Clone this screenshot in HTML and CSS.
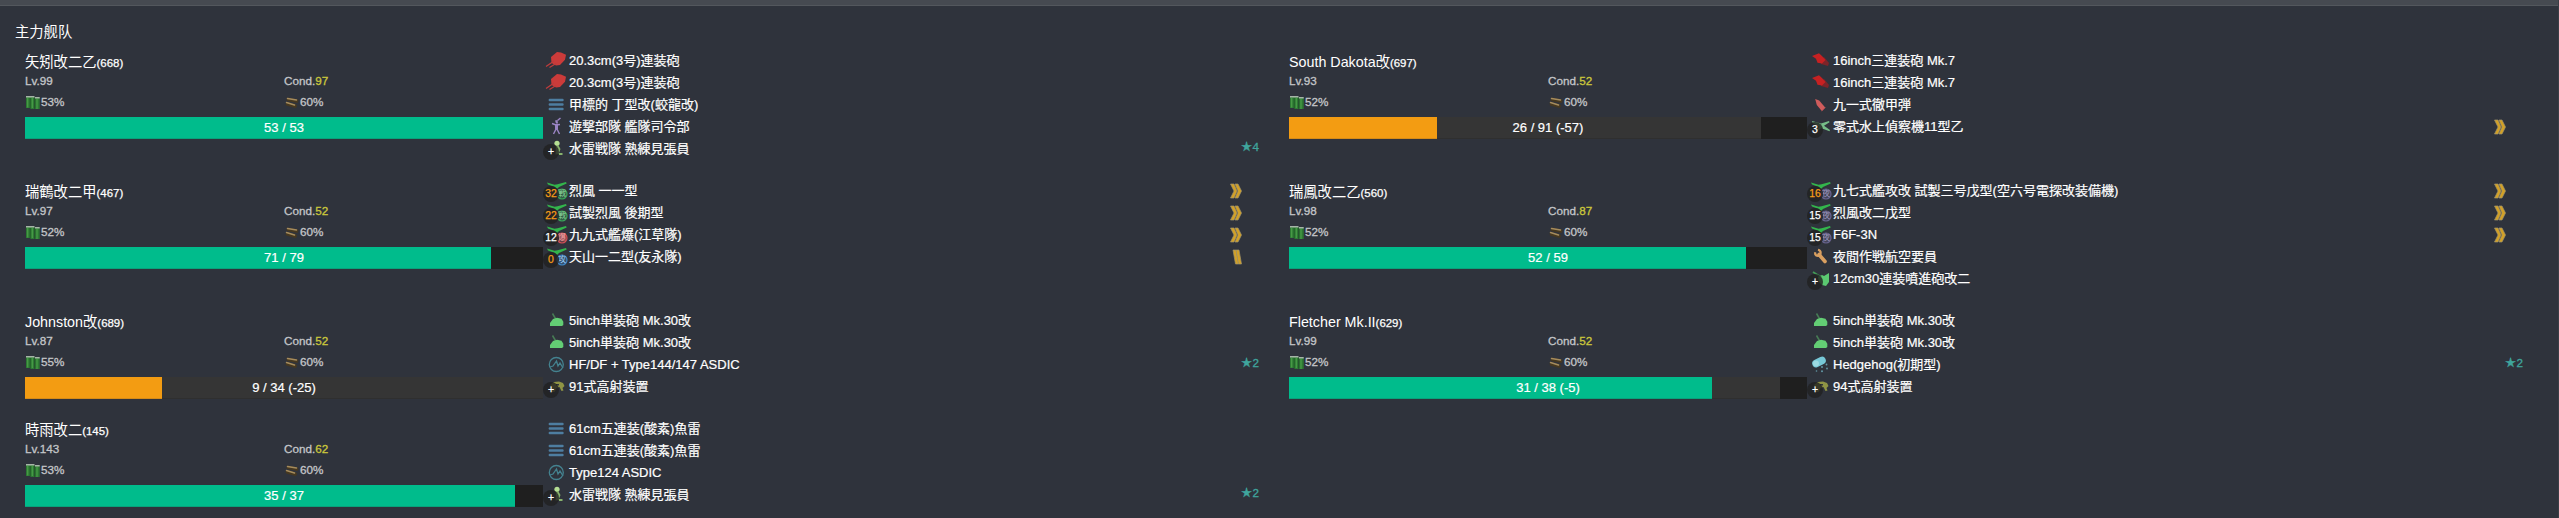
FILE: index.html
```html
<!DOCTYPE html>
<html lang="ja">
<head>
<meta charset="utf-8">
<title>主力舰队</title>
<link rel="stylesheet" href="styles.css">
</head>
<body>
<svg class="sprite" aria-hidden="true">
  <symbol id="gun-mid" viewBox="0 0 22 22"><path fill="#cb3b3a" d="M6 7l6-5 4 .5 5 2.200-1 5-5 5.300-4 .6-4.500-2.600z"/><path stroke="#c03c3c" stroke-width="1.300" fill="none" d="M9 11l-8 5.500M11 13.500l-6.500 4"/></symbol>
  <symbol id="gun-large" viewBox="0 0 22 22"><path fill="#7d2429" d="M12 9l3-2 5 6-1 3-7-2z"/><path fill="#c62122" d="M3 6l7-2.700 3 2.700 3.500 4-3.500 3.500-4.500-.7-1.500-4z"/></symbol>
  <symbol id="gun-small" viewBox="0 0 22 22"><path stroke="#477d55" stroke-width="1.500" d="M7.500 3.500l3.500 6"/><path fill="#63cd74" d="M5 16v-3l3-4 4-1.300 4.500 1 1.800 3V15l-1.300 1z"/></symbol>
  <symbol id="torpedo" viewBox="0 0 22 22"><path stroke="#4e7ea1" stroke-width="2.400" stroke-linecap="round" d="M4.800 6h12.700M4.800 10.500h12.700M4.800 15h12.700"/></symbol>
  <symbol id="command" viewBox="0 0 22 22"><g stroke="#9a84c4" fill="none" stroke-width="1.400"><path d="M7 7.500l4 1.500 4-.5M11 9v4l-2.500 5M12 9v4l2.500 5M12.500 4.500L15.500 2"/></g><path fill="#9a84c4" d="M10 4.500l2.500-.5.5 3.500h-2zM10 8h3v5.500h-3z"/></symbol>
  <symbol id="lookout" viewBox="0 0 22 22"><circle cx="12" cy="5.300" r="2.600" fill="#b5df93"/><path fill="#88b36d" d="M11 7.500h2.500l2 3.500-2 5-3 .5zM14 15h3.500v2h-3.500z"/></symbol>
  <symbol id="shell" viewBox="0 0 22 22"><path fill="#cf5c5c" d="M6.200 5l4 1.600 6 7-3.400 3.500-5-6z"/><path stroke="#9c4a50" d="M16.500 13.500l-3.700 3.700"/></symbol>
  <symbol id="seaplane" viewBox="0 0 22 22"><path fill="#76bd88" d="M3 5l9 2.500 8-2.500.5 1.200-5.500 3.500 6 4.300-.5 1.200-8-3-5 3-1-1.300 4-3.200-7-3.700z"/></symbol>
  <symbol id="plane" viewBox="0 0 22 22"><path fill="#33b54c" d="M2 2.500l7.500 2.200 3-.5 8.500-2.200.7 1.500L14 7l-2 2-2-2-7-2.500z"/></symbol>
  <symbol id="tag" viewBox="0 0 12 12"><circle cx="6" cy="6" r="5" fill="currentColor" fill-opacity=".35" stroke="currentColor" stroke-width="1.200"/></symbol>
  <symbol id="sonar" viewBox="0 0 22 22"><g stroke="#44828f" fill="none" stroke-width="1.300"><circle cx="11.300" cy="10.500" r="7"/><path d="M5 13l3-1 3.500-5 1.500 5 2-3 3 5"/></g></symbol>
  <symbol id="director" viewBox="0 0 22 22"><path fill="#8f9444" d="M5 9l4-3 5-.5 4 1.500 1.500 3-2 2 1 2.500-2 .5-2-4-3 1-2 4H7z"/><path fill="#30343d" d="M11 8h3v1.500h-3z"/></symbol>
  <symbol id="wrench" viewBox="0 0 22 22"><path fill="none" stroke="#d99f60" stroke-width="3.600" stroke-linecap="round" d="M10 8.500l6 7"/><path fill="none" stroke="#d99f60" stroke-width="2.200" d="M9 3.800c4 1 3 6 0 6-2 0-3-1.500-3-3.600"/></symbol>
  <symbol id="rocket" viewBox="0 0 22 22"><path stroke="#439857" stroke-width="1.800" d="M4 4l8 5"/><path fill="#5bc971" d="M9 9l4-2 2 1 5-3v9l-3 4-4-1-3-3z"/></symbol>
  <symbol id="hedgehog" viewBox="0 0 22 22"><path stroke="#77c8d7" stroke-width="7.600" stroke-linecap="round" d="M7 9.500l6-3"/><circle cx="7" cy="9.500" r="3" fill="#9cdae2"/><g fill="#6297a5"><circle cx="17.500" cy="10.500" r=".9"/><circle cx="13" cy="13" r="1"/><circle cx="18" cy="14.500" r=".9"/><circle cx="7.500" cy="17" r=".8"/><circle cx="13" cy="17.200" r="1"/></g></symbol>
  <symbol id="fuel" viewBox="0 0 16 16"><path fill="#2d7a33" d="M1 3h4.500v11H1zM5.500 3h4v12h-4zM10 3.500h4.700V15H10z"/><path stroke="#4a9d49" stroke-width="1.200" d="M2.700 4v9.500M7.300 4v10M12 5v10"/><path stroke="#1f5527" stroke-width=".8" d="M5.200 4v10M9.800 4v10.500"/><path fill="#a7b5a8" d="M1 2h4.500v1.500H1zM5.500 2h4v1.500h-4zM10 3h4.700v1.500H10z"/></symbol>
  <symbol id="ammo" viewBox="0 0 16 16"><g stroke-linecap="round"><path stroke="#463820" stroke-width="3.800" d="M4.500 5.500l8 1.500M3.500 10l7.500 2"/><path stroke="#a58b5d" stroke-width="1.500" d="M3.500 4.500l9 1.500M2.500 8.500l8 2.500"/></g></symbol>
  <symbol id="double-chevron" viewBox="0 0 12 16"><g fill="#d3a126" stroke="#a1946c" stroke-width=".7"><path d="M.5 1H4l3 7-3 7H.5l3.500-7z"/><path d="M5 1h3l3.500 7L8 15H5l3-7z"/></g></symbol>
  <symbol id="double-bar" viewBox="0 0 12 16"><g fill="#d3a126" stroke="#a1946c" stroke-width=".7"><path d="M3 1h3l2.500 14h-3z"/><path d="M6 1h3l2.500 14h-3z"/></g></symbol>
</svg>
<div class="topbar"></div>
<main class="fleet">
  <h1 class="fleet-title" lang="zh-CN">主力舰队</h1>
  <div class="ships" id="ships"></div>
</main>
<script src="fleet.js"></script>
</body>
</html>
```
FILE: styles.css
```css
* { box-sizing: border-box; }
body {
  margin: 0;
  height: 518px;
  background: #2f333c;
  color: #fff;
  font: 13px/22px "Liberation Sans", "Noto Sans CJK JP", sans-serif;
  border-right: 1px solid #3a3e46;
  overflow: hidden;
}
.sprite { position: absolute; width: 0; height: 0; }
.topbar { height: 6px; background: #464a51; border-bottom: 1px solid #53575d; }
.fleet { padding: 15px 0 0 15px; }
.fleet-title {
  margin: 0;
  height: 29px;
  font: 14.300px/22px "Liberation Sans", "Noto Sans CJK SC", sans-serif;
}
.ships {
  display: grid;
  grid-template-columns: 1264px 1264px;
  padding-left: 10px;
}
.ship { display: flex; gap: 2px; padding-bottom: 20px; }
.ship:last-child { padding-bottom: 0; }
.info { width: 518px; height: 88px; flex: none; white-space: nowrap; }
.name { height: 22px; font-size: 14.300px; line-height: 24px; }
.name small { font-size: 11.440px; -webkit-text-stroke: .25px; }
.stats {
  display: grid;
  grid-template-columns: 1fr 1fr;
  grid-template-rows: 17px 28px;
  align-items: center;
  color: #c4c6c9;
  font-size: 11.700px;
  line-height: 17px;
  -webkit-text-stroke: .3px;
}
.cond { color: #cbc83b; }
.supply { display: flex; align-items: center; padding-bottom: 3px; }
.supply svg { width: 16px; height: 16px; }
.hp {
  display: grid;
  height: 22px;
  background: #1f1f1f;
}
.hp > * { grid-area: 1 / 1; }
.lost { background: #353535; box-shadow: inset 0 -1px #2f2f2f; }
.now { background: #00bc8c; box-shadow: inset 0 -1px #08a27b; }
.now.warn { background: #f39c12; box-shadow: inset 0 -1px #d58b18; }
.hp-text { text-align: center; line-height: 21px; -webkit-text-stroke: .2px; }
.equips { width: 714px; }
.equip { display: flex; height: 22px; align-items: center; }
.icon { position: relative; width: 22px; height: 22px; margin-right: 2px; flex: none; }
.icon svg { display: block; width: 22px; height: 22px; }
.count {
  position: absolute;
  left: -2px;
  top: 6px;
  width: 16px;
  height: 16px;
  border-radius: 50%;
  background: rgba(32, 32, 32, .8);
  font-size: 10.400px;
  line-height: 16px;
  text-align: center;
  -webkit-text-stroke: .25px;
}
.count.full { color: #f59c18; }
.icon .type { position: absolute; left: 11px; top: 8px; width: 12px; height: 12px; }
.type-text { position: absolute; left: 13px; top: 10px; width: 8px; font-size: 8px; line-height: 8px; }
.fighter { color: #39a85a; }
.bomber { color: #d34e57; }
.attacker { color: #3f87c9; }
.night { color: #68638f; }
.equip-name { flex: 1; white-space: nowrap; line-height: 22px; -webkit-text-stroke: .2px; }
.alv { width: 12px; height: 16px; margin-right: 17px; }
.star { color: #3fa59d; font-size: 11.700px; line-height: 18px; height: 22px; -webkit-text-stroke: .3px; }
.star span { font-family: "DejaVu Sans", sans-serif; font-size: 13px; }
```
FILE: fleet.js
```js
// equipment: [icon, name, { n: slot count, full: orange count, type, alv, star }]
const ships = [
  { name: '矢矧改二乙', id: 668, lv: 99, cond: 97, fuel: 53, hp: 53, max: 53, eq: [
    ['gun-mid', '20.3cm(3号)連装砲'], ['gun-mid', '20.3cm(3号)連装砲'],
    ['torpedo', '甲標的 丁型改(蛟龍改)'], ['command', '遊撃部隊 艦隊司令部'],
    ['lookout', '水雷戦隊 熟練見張員', { n: '+', star: 4 }]] },
  { name: 'South Dakota改', id: 697, lv: 93, cond: 52, fuel: 52, hp: 26, max: 91, lost: 57, eq: [
    ['gun-large', '16inch三連装砲 Mk.7'], ['gun-large', '16inch三連装砲 Mk.7'],
    ['shell', '九一式徹甲弾'], ['seaplane', '零式水上偵察機11型乙', { n: 3, alv: 'double-chevron' }]] },
  { name: '瑞鶴改二甲', id: 467, lv: 97, cond: 52, fuel: 52, hp: 71, max: 79, eq: [
    ['plane', '烈風 一一型', { n: 32, full: 1, type: 'fighter', alv: 'double-chevron' }],
    ['plane', '試製烈風 後期型', { n: 22, full: 1, type: 'fighter', alv: 'double-chevron' }],
    ['plane', '九九式艦爆(江草隊)', { n: 12, type: 'bomber', alv: 'double-chevron' }],
    ['plane', '天山一二型(友永隊)', { n: 0, full: 1, type: 'attacker', alv: 'double-bar' }]] },
  { name: '瑞鳳改二乙', id: 560, lv: 98, cond: 87, fuel: 52, hp: 52, max: 59, eq: [
    ['plane', '九七式艦攻改 試製三号戊型(空六号電探改装備機)', { n: 16, full: 1, type: 'night', alv: 'double-chevron' }],
    ['plane', '烈風改二戊型', { n: 15, type: 'night', alv: 'double-chevron' }],
    ['plane', 'F6F-3N', { n: 15, type: 'night', alv: 'double-chevron' }],
    ['wrench', '夜間作戦航空要員'], ['rocket', '12cm30連装噴進砲改二', { n: '+' }]] },
  { name: 'Johnston改', id: 689, lv: 87, cond: 52, fuel: 55, hp: 9, max: 34, lost: 25, eq: [
    ['gun-small', '5inch単装砲 Mk.30改'], ['gun-small', '5inch単装砲 Mk.30改'],
    ['sonar', 'HF/DF + Type144/147 ASDIC', { star: 2 }], ['director', '91式高射装置', { n: '+' }]] },
  { name: 'Fletcher Mk.II', id: 629, lv: 99, cond: 52, fuel: 52, hp: 31, max: 38, lost: 5, eq: [
    ['gun-small', '5inch単装砲 Mk.30改'], ['gun-small', '5inch単装砲 Mk.30改'],
    ['hedgehog', 'Hedgehog(初期型)', { star: 2 }], ['director', '94式高射装置', { n: '+' }]] },
  { name: '時雨改二', id: 145, lv: 143, cond: 62, fuel: 53, hp: 35, max: 37, eq: [
    ['torpedo', '61cm五連装(酸素)魚雷'], ['torpedo', '61cm五連装(酸素)魚雷'],
    ['sonar', 'Type124 ASDIC'], ['lookout', '水雷戦隊 熟練見張員', { n: '+', star: 2 }]] },
];
const typeGlyph = { fighter: '戦', bomber: '爆', attacker: '攻', night: '夜' };
const typeInk = { fighter: '#8fd89d', bomber: '#ffa5a5', attacker: '#9ccdf5', night: '#9b95bd' };
const svg = (id, cls = '') => `<svg class="${cls}"><use href="#${id}"/></svg>`;

function equipRow([icon, name, o = {}]) {
  const count = o.n === undefined ? '' : `<span class="count${o.full ? ' full' : ''}">${o.n}</span>`;
  const type = o.type
    ? svg('tag', `type ${o.type}`) + `<span class="type-text" style="color:${typeInk[o.type]}">${typeGlyph[o.type]}</span>`
    : '';
  return `<div class="equip"><div class="icon">${svg(icon)}${type}${count}</div>
    <div class="equip-name">${name}</div>
    ${o.alv ? svg(o.alv, 'alv') : ''}
    ${o.star ? `<div class="star"><span>★</span>${o.star}</div>` : ''}</div>`;
}

document.getElementById('ships').innerHTML = ships.map(s => {
  const pct = v => (v / s.max * 100).toFixed(2) + '%';
  const lost = s.lost ? `<div class="lost" style="width:${pct(s.hp + s.lost)}"></div>` : '';
  const warn = s.hp / s.max < 0.5 ? ' warn' : '';
  return `<section class="ship"><div class="info">
    <div class="name">${s.name}<small>(${s.id})</small></div>
    <div class="stats">
      <div>Lv.${s.lv}</div><div>Cond.<span class="cond">${s.cond}</span></div>
      <div class="supply">${svg('fuel')}${s.fuel}%</div><div class="supply">${svg('ammo')}60%</div>
    </div>
    <div class="hp">${lost}<div class="now${warn}" style="width:${pct(s.hp)}"></div>
      <div class="hp-text">${s.hp} / ${s.max}${s.lost ? ` (-${s.lost})` : ''}</div></div>
  </div><div class="equips">${s.eq.map(equipRow).join('')}</div></section>`;
}).join('');
```
